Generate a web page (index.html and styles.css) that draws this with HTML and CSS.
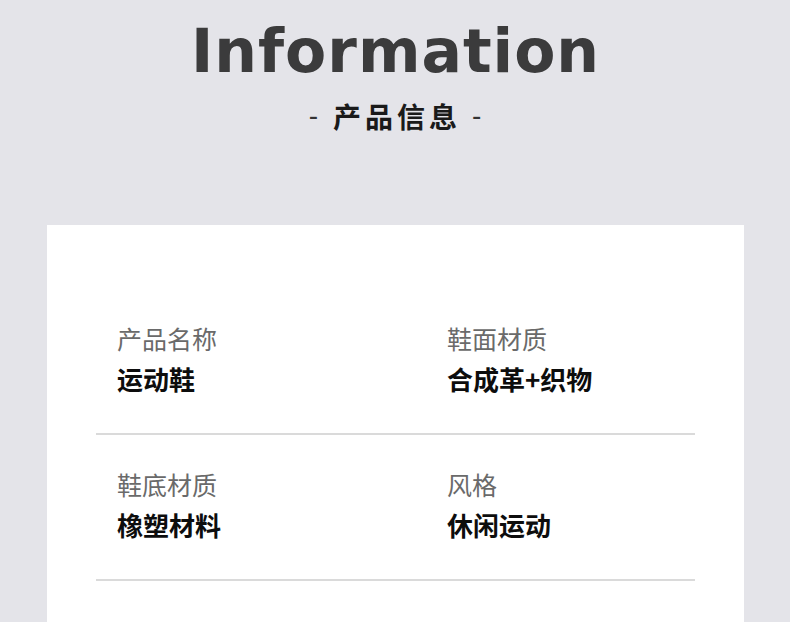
FILE: index.html
```html
<!DOCTYPE html>
<html lang="zh-CN">
<head>
<meta charset="utf-8">
<title>Information</title>
<link rel="stylesheet" href="styles.css">
</head>
<body>
<div class="page">
  <header class="head">
    <h1 class="title">Information</h1>
    <div class="subtitle">
      <span class="dash">-</span>
      <span class="sub-text">产品信息</span>
      <span class="dash">-</span>
    </div>
  </header>
  <section class="card">
    <div class="row">
      <div class="cell">
        <div class="label">产品名称</div>
        <div class="value">运动鞋</div>
      </div>
      <div class="cell">
        <div class="label">鞋面材质</div>
        <div class="value">合成革+织物</div>
      </div>
    </div>
    <div class="row">
      <div class="cell">
        <div class="label">鞋底材质</div>
        <div class="value">橡塑材料</div>
      </div>
      <div class="cell">
        <div class="label">风格</div>
        <div class="value">休闲运动</div>
      </div>
    </div>
  </section>
</div>
</body>
</html>
```

FILE: styles.css
```css
html, body {
  margin: 0;
  padding: 0;
}
body {
  background: #e4e4e9;
  font-family: "Noto Sans CJK SC", "Noto Sans", sans-serif;
  overflow: hidden;
}
.page {
  width: 790px;
  height: 622px;
  overflow: hidden;
}
.head {
  padding-top: 21px;
  display: flex;
  flex-direction: column;
  align-items: center;
}
.title {
  margin: 0 0 0 1px;
  font-family: "DejaVu Sans", sans-serif;
  font-weight: bold;
  font-size: 60px;
  line-height: 60px;
  color: #3b3b3c;
  letter-spacing: 1px;
}
.subtitle {
  margin-top: 18px;
  height: 34px;
  display: flex;
  align-items: center;
  gap: 15px;
  color: #1a1a1a;
}
.dash {
  font-family: "Liberation Sans", sans-serif;
  font-size: 28px;
  line-height: 34px;
  color: #333;
}
.sub-text {
  font-size: 28px;
  line-height: 34px;
  font-weight: bold;
  letter-spacing: 4px;
  margin-right: -4px;
}
.card {
  margin: 92px 0 0 47px;
  width: 697px;
  height: 420px;
  background: #ffffff;
  box-sizing: border-box;
  padding: 64px 49px 0;
}
.row {
  display: grid;
  grid-template-columns: 330px 1fr;
  padding: 34px 0 39px;
  border-bottom: 2px solid #dadada;
}
.cell {
  padding-left: 21px;
  display: flex;
  flex-direction: column;
  gap: 11px;
}
.label {
  font-size: 25px;
  line-height: 30px;
  color: #6a6a6a;
}
.value {
  font-size: 26px;
  line-height: 30px;
  font-weight: bold;
  color: #0d0d0d;
}
```
